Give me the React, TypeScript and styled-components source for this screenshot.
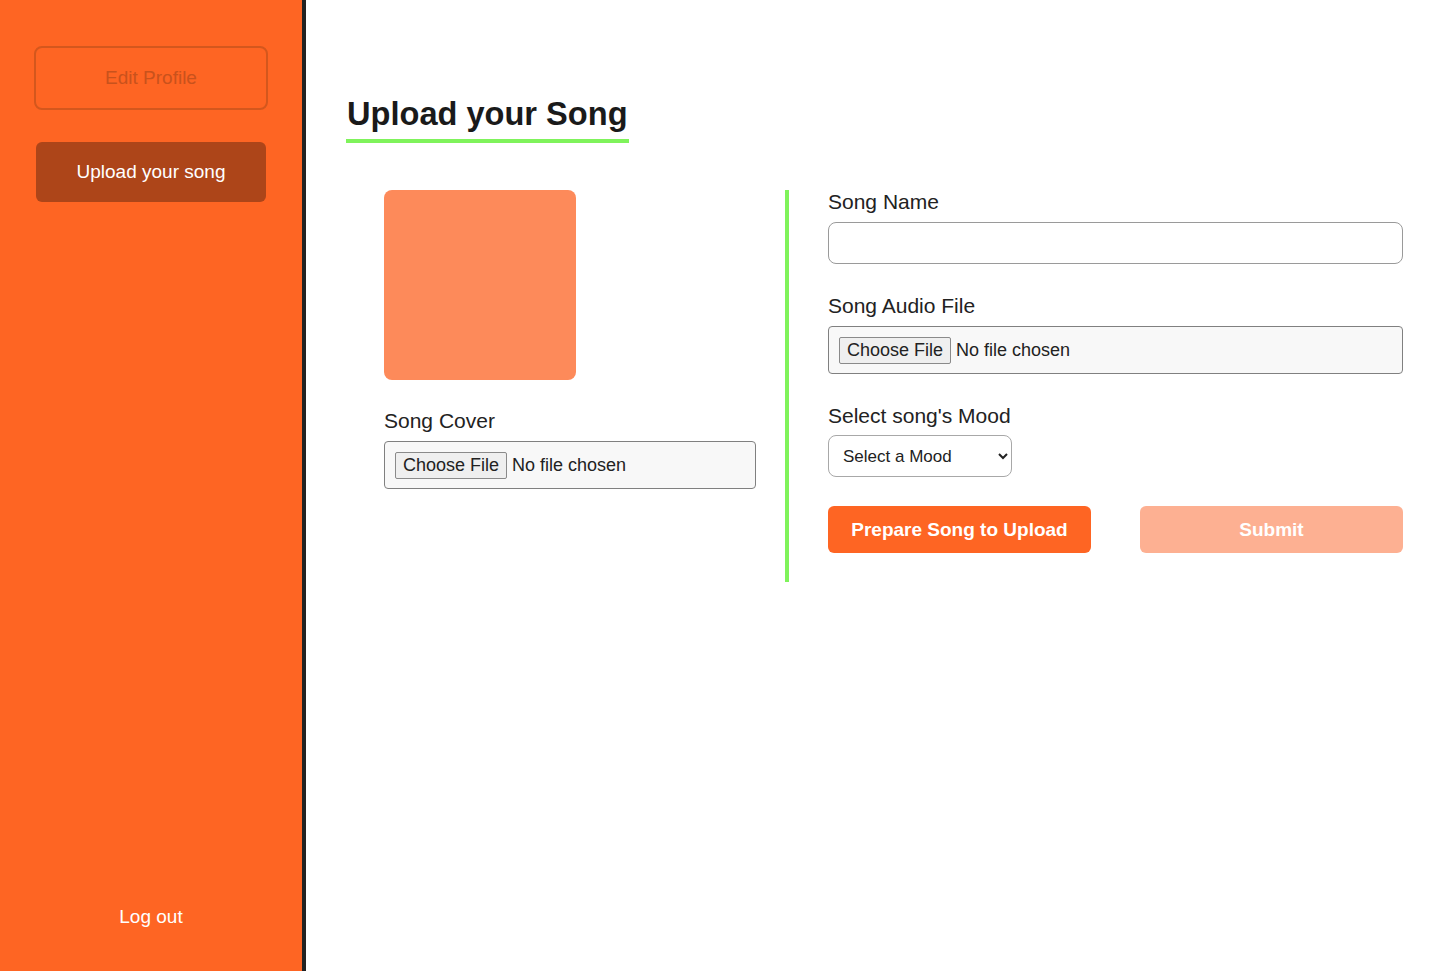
import React from 'react';
import styled, { createGlobalStyle } from 'styled-components';

const GlobalStyle = createGlobalStyle`
    html, body {
        margin: 0;
        padding: 0;
        background: #ffffff;
        font-family: 'Liberation Sans', Arial, sans-serif;
    }
    * {
        box-sizing: border-box;
    }
`;

const ORANGE = '#fe6523';

export default (() => {
    return (
        <>
            <GlobalStyle />
            <Page>
                <Sidebar>
                    <OutlineButton>Edit Profile</OutlineButton>
                    <ActiveButton>Upload your song</ActiveButton>
                    <LogOut>Log out</LogOut>
                </Sidebar>
                <Main>
                    <Title>Upload your Song</Title>
                    <Form>
                        <CoverColumn>
                            <CoverPreview />
                            <Field>
                                <Label>Song Cover</Label>
                                <FileInput />
                            </Field>
                        </CoverColumn>
                        <Divider />
                        <DetailsColumn>
                            <Field>
                                <Label>Song Name</Label>
                                <TextInput type="text" />
                            </Field>
                            <Field>
                                <Label>Song Audio File</Label>
                                <FileInput />
                            </Field>
                            <Field>
                                <Label>Select song's Mood</Label>
                                <MoodSelect defaultValue="">
                                    <option value="">Select a Mood</option>
                                    <option value="happy">Happy</option>
                                    <option value="sad">Sad</option>
                                </MoodSelect>
                            </Field>
                            <Actions>
                                <ActionButton>Prepare Song to Upload</ActionButton>
                                <ActionButton disabled>Submit</ActionButton>
                            </Actions>
                        </DetailsColumn>
                    </Form>
                </Main>
            </Page>
        </>
    );
}) as React.FC;

const FileInput: React.FC = () => (
    <FileBox>
        <ChooseButton type="button">Choose File</ChooseButton>
        <span>No file chosen</span>
    </FileBox>
);

const Page = styled.div`
    display: flex;
    min-height: 971px;
`;

const Sidebar = styled.nav`
    width: 306px;
    flex-shrink: 0;
    display: flex;
    flex-direction: column;
    align-items: center;
    padding: 46px 34px 43px 34px;
    background: ${ORANGE};
    border-right: 4px solid #222222;
`;

const OutlineButton = styled.button`
    width: 234px;
    height: 64px;
    background: transparent;
    border: 2px solid #d4571d;
    border-radius: 8px;
    color: #c9521c;
    font-family: inherit;
    font-size: 19px;
`;

const ActiveButton = styled.button`
    width: 230px;
    height: 60px;
    margin-top: 32px;
    background: #ad4519;
    border: none;
    border-radius: 6px;
    color: #ffffff;
    font-family: inherit;
    font-size: 19px;
`;

const LogOut = styled.div`
    margin-top: auto;
    color: #ffffff;
    font-size: 19px;
`;

const Main = styled.main`
    flex: 1;
    padding: 95px 37px 0 40px;
`;

const Title = styled.h1`
    display: inline-block;
    margin: 0;
    padding: 0 1px 6px 1px;
    font-size: 32.6px;
    font-weight: 700;
    color: #1a1a1a;
    border-bottom: 4px solid #7ff35b;
`;

const Form = styled.section`
    display: flex;
    margin-top: 47px;
`;

const CoverColumn = styled.div`
    width: 439px;
    padding-left: 38px;
    padding-right: 29px;
    display: flex;
    flex-direction: column;
    gap: 29px;
`;

const CoverPreview = styled.div`
    width: 192px;
    height: 190px;
    background: #fd8a5a;
    border-radius: 8px;
`;

const Divider = styled.div`
    width: 4px;
    height: 392px;
    background: #7ff35b;
`;

const DetailsColumn = styled.div`
    flex: 1;
    padding-left: 39px;
    display: flex;
    flex-direction: column;
    gap: 30px;
`;

const Field = styled.div`
    display: flex;
    flex-direction: column;
    align-items: flex-start;
    gap: 8px;
`;

const Label = styled.label`
    font-size: 21px;
    line-height: 24px;
    color: #222222;
`;

const TextInput = styled.input`
    width: 100%;
    height: 42px;
    border: 1px solid #9a9a9a;
    border-radius: 8px;
    padding: 0 12px;
    font-family: inherit;
    font-size: 16px;
`;

const FileBox = styled.div`
    width: 100%;
    height: 48px;
    display: flex;
    align-items: center;
    gap: 5px;
    padding: 0 10px;
    background: #f8f8f8;
    border: 1px solid #808080;
    border-radius: 4px;
    font-size: 18px;
    color: #222222;
`;

const ChooseButton = styled.button`
    height: 27px;
    padding: 0 7px;
    background: #efefef;
    border: 1px solid #8a8a8a;
    border-radius: 2px;
    font-family: inherit;
    font-size: 18px;
    color: #222222;
`;

const MoodSelect = styled.select`
    width: 184px;
    height: 42px;
    margin-top: -1px;
    padding: 0 10px;
    background: #ffffff;
    border: 1px solid #a8a8a8;
    border-radius: 8px;
    font-family: inherit;
    font-size: 17px;
    color: #222222;
`;

const Actions = styled.div`
    display: flex;
    justify-content: space-between;
    margin-top: -1px;
`;

const ActionButton = styled.button`
    width: 263px;
    height: 47px;
    border: none;
    border-radius: 6px;
    background: ${(p) => (p.disabled ? '#fdb092' : ORANGE)};
    color: #ffffff;
    font-family: inherit;
    font-size: 19px;
    font-weight: 700;
`;
